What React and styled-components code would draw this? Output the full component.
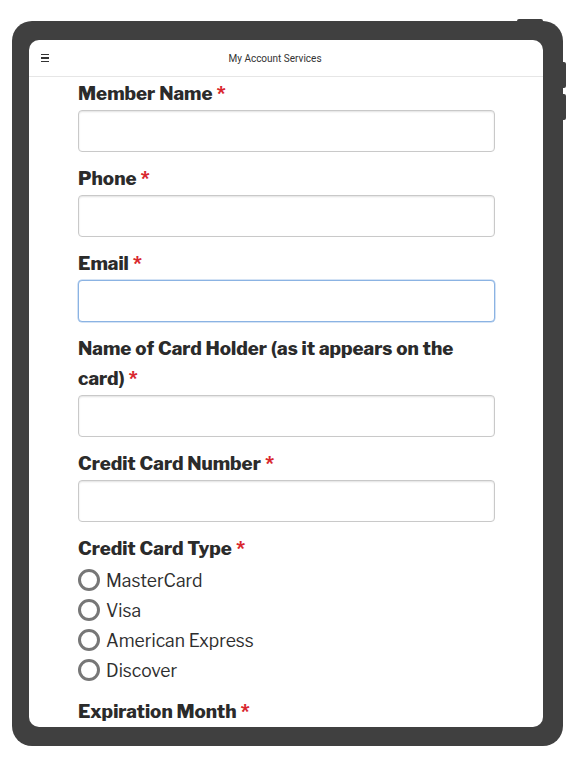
import styled, { createGlobalStyle } from "styled-components";

const GlobalStyle = createGlobalStyle`
  html, body {
    margin: 0;
    padding: 0;
    background: #ffffff;
  }
  * {
    box-sizing: border-box;
  }
`;

const Page = styled.div`
  width: 576px;
  height: 768px;
  padding: 21px 13px 22px 12px;
  background: #ffffff;
`;

const Device = styled.div`
  position: relative;
  height: 100%;
  background: #404040;
  border-radius: 20px;
  padding: 19px 20px 19px 17px;
`;

const SideButton = styled.span`
  position: absolute;
  background: #404040;
  ${({ $side }) =>
    $side === "top"
      ? `top: -2px; right: 20px; width: 26px; height: 3px; border-radius: 2px 2px 0 0;`
      : `right: -3px; width: 3px; height: 26px; border-radius: 0 2px 2px 0;`}
`;

const Screen = styled.div`
  height: 100%;
  background: #ffffff;
  border-radius: 10px;
  overflow: hidden;
  display: flex;
  flex-direction: column;
`;

const Header = styled.header`
  flex: 0 0 37px;
  display: flex;
  align-items: center;
  border-bottom: 1px solid #e6e6e6;
  padding: 0 12px;
`;

const Burger = styled.span`
  display: flex;
  flex-direction: column;
  gap: 2px;
  width: 8px;

  i {
    display: block;
    height: 1.2px;
    background: #333;
  }
`;

const HeaderTitle = styled.div`
  flex: 1;
  text-align: center;
  font-family: Roboto, "Liberation Sans", sans-serif;
  font-size: 10px;
  color: #333;
  padding-right: 30px;
`;

const Form = styled.form`
  flex: 1;
  padding: 2px 48px 0 49px;
  display: flex;
  flex-direction: column;
  gap: 12px;
`;

const Field = styled.div`
  display: flex;
  flex-direction: column;
  gap: 1px;
`;

const Label = styled.label`
  font-family: "Libre Franklin", Inter, "Liberation Sans", sans-serif;
  font-weight: 800;
  font-size: 18.8px;
  line-height: 30px;
  color: #2b2b2b;
  padding-right: 24px;
`;

const Required = styled.span`
  color: #d9272e;
  margin-left: 4px;
`;

const Input = styled.input`
  display: block;
  width: 100%;
  height: 42px;
  border-radius: 4px;
  border: 1px solid ${({ $focused }) => ($focused ? "#8bb3e3" : "#c9c9c9")};
  box-shadow: ${({ $focused }) =>
    $focused
      ? "0 0 0 0.5px #a9c7ec"
      : "inset 0 1px 2px rgba(0, 0, 0, 0.12)"};
  background: #fff;
  outline: none;
  font-size: 16px;
  padding: 0 10px;
`;

const RadioList = styled.div`
  display: flex;
  flex-direction: column;
`;

const RadioRow = styled.label`
  display: flex;
  align-items: center;
  gap: 6px;
  height: 30px;
  font-family: "Libre Franklin", Inter, "Liberation Sans", sans-serif;
  font-size: 17.5px;
  color: #2e2e2e;
`;

const RadioCircle = styled.span`
  width: 22px;
  height: 22px;
  border-radius: 50%;
  border: 3px solid #777;
  background: #fff;
  flex: 0 0 auto;
`;

const fields = [
  { label: "Member Name" },
  { label: "Phone" },
  { label: "Email", focused: true },
  { label: "Name of Card Holder (as it appears on the card)" },
  { label: "Credit Card Number" },
];

const cardTypes = ["MasterCard", "Visa", "American Express", "Discover"];

export default function App() {
  return (
    <>
      <GlobalStyle />
      <Page>
        <Device>
          <SideButton $side="top" />
          <SideButton style={{ top: 41 }} />
          <SideButton style={{ top: 73 }} />
          <Screen>
            <Header>
              <Burger>
                <i />
                <i />
                <i />
              </Burger>
              <HeaderTitle>My Account Services</HeaderTitle>
            </Header>
            <Form>
              {fields.map((f) => (
                <Field key={f.label}>
                  <Label>
                    {f.label}
                    <Required>*</Required>
                  </Label>
                  <Input $focused={f.focused} />
                </Field>
              ))}
              <Field>
                <Label>
                  Credit Card Type<Required>*</Required>
                </Label>
                <RadioList>
                  {cardTypes.map((t) => (
                    <RadioRow key={t}>
                      <RadioCircle />
                      {t}
                    </RadioRow>
                  ))}
                </RadioList>
              </Field>
              <Field>
                <Label>
                  Expiration Month<Required>*</Required>
                </Label>
              </Field>
            </Form>
          </Screen>
        </Device>
      </Page>
    </>
  );
}
